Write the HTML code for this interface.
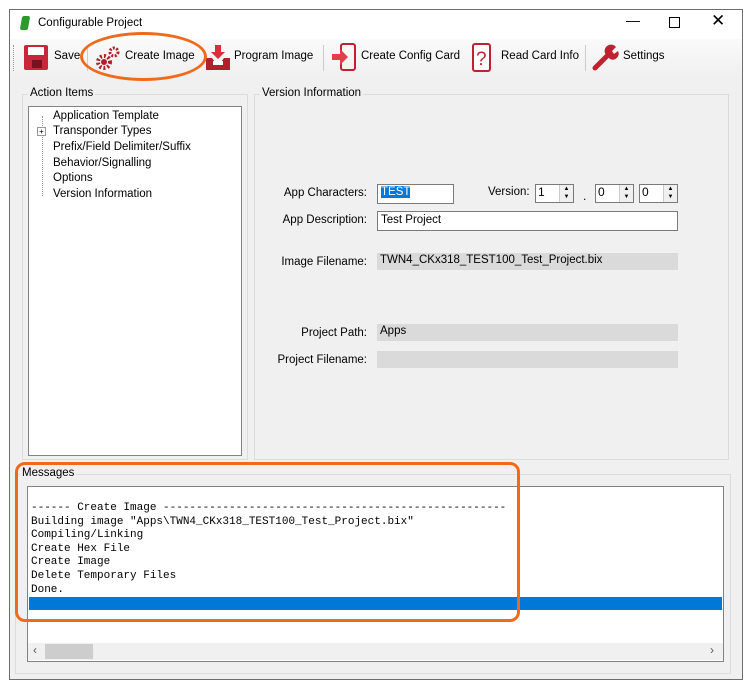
<!DOCTYPE html>
<html><head><style>
*{margin:0;padding:0;box-sizing:border-box}
body{width:751px;height:690px;background:#fff;position:relative;overflow:hidden;font-family:"Liberation Sans",sans-serif;font-size:12px;color:#000}
.a{position:absolute}
.win{left:9px;top:9px;width:734px;height:671px;border:1px solid #6e6e6e;background:#f0f0f0}
.title{left:10px;top:10px;width:732px;height:29px;background:#fff}
.tb{left:10px;top:39px;width:732px;height:38px;background:linear-gradient(#fafafa,#f0f0f0)}
.grp{border:1px solid #dcdcdc}
.lbl{background:#f0f0f0;padding:0 2px;font-size:11.5px}
.tree{background:#fff;border:1px solid #828282}
.ti{position:absolute;left:24px;font-size:11.5px}
.r{text-align:right;width:120px;font-size:11.5px}
.in{background:#fff;border:1px solid #7a7a7a;font-size:11.5px;padding:2px 3px}
.ro{background:#dadada;font-size:11.5px;padding:2px 3px}
.spin{background:#fff;border:1px solid #7a7a7a;height:19px}
.sb{position:absolute;right:0;top:0;width:14px;height:17px;border-left:1px solid #ccc;background:#f0f0f0;font-size:6px;line-height:8px;text-align:center}
.mono{font-family:"Liberation Mono",monospace;font-size:11px;line-height:13.6px;white-space:pre}
.tbt{font-size:11.5px;top:50px}
</style></head><body>
<div class="a win"></div>
<div class="a title"></div>
<div class="a" style="left:21px;top:16px;width:8px;height:14px;background:#2a9a2a;transform:skew(-10deg);border-radius:2px"></div>
<div class="a" style="left:38px;top:17px;font-size:11.5px">Configurable Project</div>
<div class="a" style="left:626px;top:12px;font-size:14px">&#8212;</div>
<div class="a" style="left:669px;top:17px;width:11px;height:11px;border:1px solid #000"></div>
<div class="a" style="left:711px;top:11px;font-size:17px">&#10005;</div>
<div class="a tb"></div>
<div class="a" style="left:13px;top:45px;height:26px;border-left:1px dotted #999"></div>
<div class="a" style="left:24px;top:45px;width:24px;height:25px;background:#c8263a;border-radius:2px"></div>
<div class="a" style="left:28px;top:47px;width:16px;height:8px;background:#fff"></div>
<div class="a" style="left:32px;top:60px;width:10px;height:8px;background:#7a1020"></div>
<div class="a tbt" style="left:54px">Save</div>
<div class="a" style="left:87px;top:45px;height:26px;border-left:1px solid #ccc"></div>
<svg class="a" style="left:94px;top:44px" width="28" height="28"><circle cx="10" cy="18" r="6" fill="none" stroke="#b0202a" stroke-width="4" stroke-dasharray="2 2"/><circle cx="10" cy="18" r="3" fill="#b0202a"/><circle cx="20" cy="8" r="4" fill="none" stroke="#b0202a" stroke-width="3" stroke-dasharray="2 1.5"/></svg>
<div class="a tbt" style="left:125px">Create Image</div>
<svg class="a" style="left:204px;top:44px" width="28" height="28"><path d="M11 1h6v7h4l-7 7-7-7h4z" fill="#d8303a"/><path d="M2 14h6l3 4h6l3-4h6v12H2z" fill="#b0202a"/><rect x="9" y="17" width="10" height="4" fill="#fff"/></svg>
<div class="a tbt" style="left:234px">Program Image</div>
<div class="a" style="left:323px;top:45px;height:26px;border-left:1px solid #ccc"></div>
<svg class="a" style="left:330px;top:42px" width="28" height="30"><rect x="11" y="2" width="14" height="26" rx="2" fill="none" stroke="#c02030" stroke-width="2"/><path d="M2 12h8v-5l8 8-8 8v-5H2z" fill="#e0404a"/></svg>
<div class="a tbt" style="left:361px">Create Config Card</div>
<svg class="a" style="left:472px;top:43px" width="20" height="30"><rect x="1" y="1" width="17" height="27" rx="2" fill="#fff" stroke="#c02030" stroke-width="2"/><text x="4" y="22" font-family="Liberation Sans" font-size="19" fill="#c02030">?</text></svg>
<div class="a tbt" style="left:501px">Read Card Info</div>
<div class="a" style="left:585px;top:45px;height:26px;border-left:1px solid #ccc"></div>
<svg class="a" style="left:592px;top:43px" width="28" height="28"><path d="M3 25l12-12" stroke="#c02030" stroke-width="5" stroke-linecap="round"/><path d="M14 12a6 6 0 0 1 10-8l-4 4 2 3 4-3a6 6 0 0 1-8 8z" fill="#c02030"/></svg>
<div class="a tbt" style="left:623px">Settings</div>
<div class="a grp" style="left:22px;top:94px;width:226px;height:366px"></div>
<div class="a lbl" style="left:28px;top:87px">Action Items</div>
<div class="a tree" style="left:28px;top:106px;width:214px;height:350px"></div>
<div class="a" style="left:42px;top:116px;height:80px;border-left:1px dotted #999"></div>
<div class="a" style="left:37px;top:127px;width:9px;height:9px;border:1px solid #999;background:#fff;font-size:8px;line-height:7px;text-align:center">+</div>
<div class="ti a" style="left:53px;top:110px">Application Template</div>
<div class="ti a" style="left:53px;top:125px">Transponder Types</div>
<div class="ti a" style="left:53px;top:141px">Prefix/Field Delimiter/Suffix</div>
<div class="ti a" style="left:53px;top:157px">Behavior/Signalling</div>
<div class="ti a" style="left:53px;top:172px">Options</div>
<div class="ti a" style="left:53px;top:188px">Version Information</div>
<div class="a grp" style="left:254px;top:94px;width:475px;height:366px"></div>
<div class="a lbl" style="left:260px;top:87px">Version Information</div>
<div class="a r" style="left:247px;top:187px">App Characters:</div>
<div class="a in" style="left:377px;top:184px;width:77px;height:20px;padding-top:1px"><span style="background:#0078d7;color:#fff">TEST</span></div>
<div class="a" style="left:488px;top:186px;font-size:11.5px">Version:</div>
<div class="a spin" style="left:535px;top:184px;width:39px"><span style="padding-left:2px">1</span><div class="sb">▲<br>▼</div></div>
<div class="a" style="left:583px;top:189px">.</div>
<div class="a spin" style="left:595px;top:184px;width:39px"><span style="padding-left:2px">0</span><div class="sb">▲<br>▼</div></div>
<div class="a spin" style="left:639px;top:184px;width:39px"><span style="padding-left:2px">0</span><div class="sb">▲<br>▼</div></div>
<div class="a r" style="left:247px;top:214px">App Description:</div>
<div class="a in" style="left:377px;top:211px;width:301px;height:20px">Test Project</div>
<div class="a r" style="left:247px;top:256px">Image Filename:</div>
<div class="a ro" style="left:377px;top:253px;width:301px;height:17px;padding-top:1px">TWN4_CKx318_TEST100_Test_Project.bix</div>
<div class="a r" style="left:247px;top:327px">Project Path:</div>
<div class="a ro" style="left:377px;top:324px;width:301px;height:17px;padding-top:1px">Apps</div>
<div class="a r" style="left:247px;top:354px">Project Filename:</div>
<div class="a ro" style="left:377px;top:351px;width:301px;height:17px"></div>
<div class="a grp" style="left:15px;top:474px;width:716px;height:200px"></div>
<div class="a lbl" style="left:20px;top:467px">Messages</div>
<div class="a" style="left:27px;top:486px;width:697px;height:176px;background:#fff;border:1px solid #828282"></div>
<div class="a" style="left:29px;top:597px;width:693px;height:13px;background:#0078d7"></div>
<div class="a mono" style="left:31px;top:502px">------ Create Image ----------------------------------------------------
Building image "Apps\TWN4_CKx318_TEST100_Test_Project.bix"
Compiling/Linking
Create Hex File
Create Image
Delete Temporary Files
Done.</div>
<div class="a" style="left:28px;top:643px;width:695px;height:17px;background:#f0f0f0"></div>
<div class="a" style="left:45px;top:644px;width:48px;height:15px;background:#cdcdcd"></div>
<div class="a" style="left:33px;top:643px;font-size:12px;color:#555">&#8249;</div>
<div class="a" style="left:710px;top:643px;font-size:12px;color:#555">&#8250;</div>
<div class="a" style="left:80px;top:32px;width:127px;height:49px;border:3px solid #f06a1c;border-radius:50%"></div>
<div class="a" style="left:15px;top:462px;width:505px;height:160px;border:3px solid #f06a1c;border-radius:10px"></div>
</body></html>
